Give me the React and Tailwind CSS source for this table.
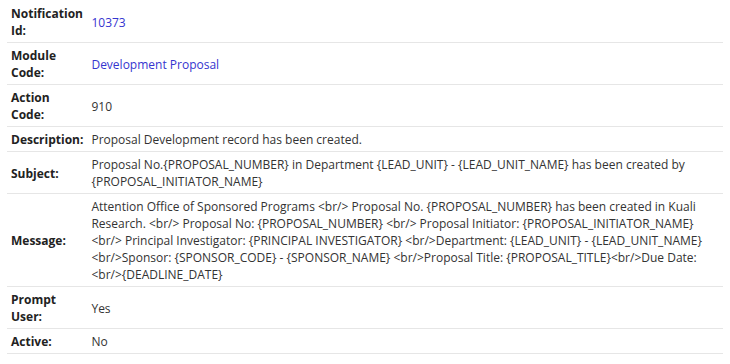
import React from 'react';

const rows = [
  { label: 'Notification Id:', value: '10373', link: true },
  { label: 'Module Code:', value: 'Development Proposal', link: true },
  { label: 'Action Code:', value: '910' },
  { label: 'Description:', value: 'Proposal Development record has been created.' },
  {
    label: 'Subject:',
    value:
      'Proposal No.{PROPOSAL_NUMBER} in Department {LEAD_UNIT} - {LEAD_UNIT_NAME} has been created by {PROPOSAL_INITIATOR_NAME}',
  },
  {
    label: 'Message:',
    value:
      'Attention Office of Sponsored Programs <br/> Proposal No. {PROPOSAL_NUMBER} has been created in Kuali Research. <br/> Proposal No: {PROPOSAL_NUMBER} <br/> Proposal Initiator: {PROPOSAL_INITIATOR_NAME} <br/> Principal Investigator: {PRINCIPAL INVESTIGATOR} <br/>Department: {LEAD_UNIT} - {LEAD_UNIT_NAME} <br/>Sponsor: {SPONSOR_CODE} - {SPONSOR_NAME} <br/>Proposal Title: {PROPOSAL_TITLE}<br/>Due Date: <br/>{DEADLINE_DATE}',
  },
  { label: 'Prompt User:', value: 'Yes' },
  { label: 'Active:', value: 'No' },
];

const App = () => {
  return (
    <div
      className="bg-white w-[730px] h-[364px] pt-[1px] px-[7px] text-[12px] leading-[17px] text-[#333]"
      style={{ fontFamily: '"Open Sans", sans-serif' }}
    >
      <table className="w-[716px] border-collapse">
        <tbody>
          {rows.map((row) => (
            <tr key={row.label} className="border-b border-[#e6e6e6]">
              <td className="w-[80px] px-[4px] pt-[4px] pb-[3px] align-middle font-bold text-[#222]">
                {row.label}
              </td>
              <td className="pl-[4px] pr-[20px] pt-[4px] pb-[3px] align-middle">
                {row.link ? <a className="text-[#3535cf]">{row.value}</a> : row.value}
              </td>
            </tr>
          ))}
        </tbody>
      </table>
    </div>
  );
};

export default App;
